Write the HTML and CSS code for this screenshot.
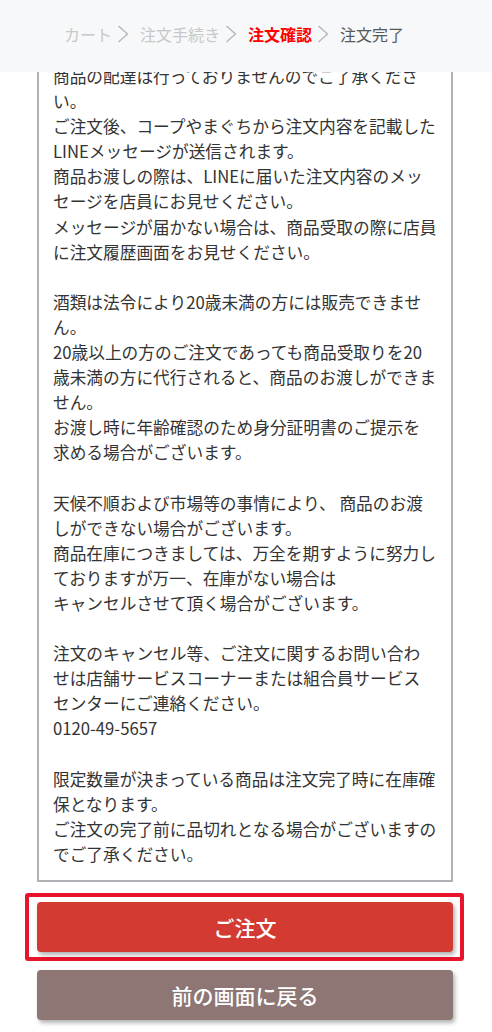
FILE: index.html
```html
<!DOCTYPE html>
<html lang="ja">
<head>
<meta charset="utf-8">
<meta name="viewport" content="width=device-width, initial-scale=1">
<title>注文確認</title>
<link rel="stylesheet" href="styles.css">
</head>
<body>
<header class="steps">
  <span class="step step-done">カート</span>
  <svg class="chev" viewBox="0 0 12 18" aria-hidden="true"><polyline points="1.5,1 10.5,9 1.5,17"/></svg>
  <span class="step step-done">注文手続き</span>
  <svg class="chev" viewBox="0 0 12 18" aria-hidden="true"><polyline points="1.5,1 10.5,9 1.5,17"/></svg>
  <span class="step step-current">注文確認</span>
  <svg class="chev" viewBox="0 0 12 18" aria-hidden="true"><polyline points="1.5,1 10.5,9 1.5,17"/></svg>
  <span class="step step-todo">注文完了</span>
</header>

<main class="page">
  <div class="notice">
    <p>商品の配達は行っておりませんのでご了承くださ<br>い。<br>ご注文後、コープやまぐちから注文内容を記載した<br>LINEメッセージが送信されます。<br>商品お渡しの際は、LINEに届いた注文内容のメッ<br>セージを店員にお見せください。<br>メッセージが届かない場合は、商品受取の際に店員<br>に注文履歴画面をお見せください。</p>
    <p>酒類は法令により20歳未満の方には販売できませ<br>ん。<br>20歳以上の方のご注文であっても商品受取りを20<br>歳未満の方に代行されると、商品のお渡しができま<br>せん。<br>お渡し時に年齢確認のため身分証明書のご提示を<br>求める場合がございます。</p>
    <p>天候不順および市場等の事情により、 商品のお渡<br>しができない場合がございます。<br>商品在庫につきましては、万全を期すように努力し<br>ておりますが万一、在庫がない場合は<br>キャンセルさせて頂く場合がございます。</p>
    <p>注文のキャンセル等、ご注文に関するお問い合わ<br>せは店舗サービスコーナーまたは組合員サービス<br>センターにご連絡ください。<br>0120-49-5657</p>
    <p>限定数量が決まっている商品は注文完了時に在庫確<br>保となります。<br>ご注文の完了前に品切れとなる場合がございますの<br>でご了承ください。</p>
  </div>

  <div class="highlight">
    <button class="btn btn-order" type="button">ご注文</button>
  </div>
  <button class="btn btn-back" type="button">前の画面に戻る</button>
</main>
</body>
</html>
```

FILE: styles.css
```css
* {
  box-sizing: border-box;
}

html, body {
  margin: 0;
  padding: 0;
  background: #ffffff;
}

body {
  font-family: "Noto Sans CJK JP", "Noto Sans", sans-serif;
  color: #333333;
}

/* breadcrumb header */
.steps {
  position: fixed;
  top: 0;
  left: 0;
  right: 0;
  height: 72px;
  z-index: 10;
  display: flex;
  align-items: center;
  padding: 0 0 4px 64px;
  background: #f7f8fa;
}

.step {
  font-size: 16px;
  line-height: 1;
  white-space: nowrap;
}

.step-done {
  color: #c8c8c8;
}

.step-current {
  color: #ff0000;
  font-weight: 700;
}

.step-todo {
  color: #595959;
}

.chev {
  width: 12px;
  height: 18px;
  margin: 0 11px 0 5px;
  flex: none;
}

.chev polyline {
  fill: none;
  stroke: #b4b4b4;
  stroke-width: 1.3;
  stroke-linejoin: miter;
}

/* content */
.page {
  padding: 48px 39px 12px 37px;
}

.notice {
  border: 2px solid #aeb1b5;
  padding: 14px 6px 13px 14px;
  font-size: 16.7px;
  line-height: 25.1px;
  color: #333333;
}

.notice p {
  margin: 0;
}

.notice p + p {
  margin-top: 25.1px;
}

.highlight {
  margin: 11px -11px 0 -12px;
  border: 4px solid #e8142b;
  border-radius: 3px;
  padding: 5px 7px 5px 8px;
}

.btn {
  display: block;
  width: 100%;
  height: 50px;
  border: none;
  border-radius: 4px;
  color: #ffffff;
  font-family: "Noto Sans CJK JP", "Noto Sans", sans-serif;
  font-size: 21px;
  font-weight: 500;
  line-height: 1;
  box-shadow: 2px 3px 4px rgba(0, 0, 0, 0.3);
  cursor: pointer;
}

.btn-order {
  background: #d23a32;
}

.btn-back {
  margin-top: 9px;
  background: #8d7674;
}
```
